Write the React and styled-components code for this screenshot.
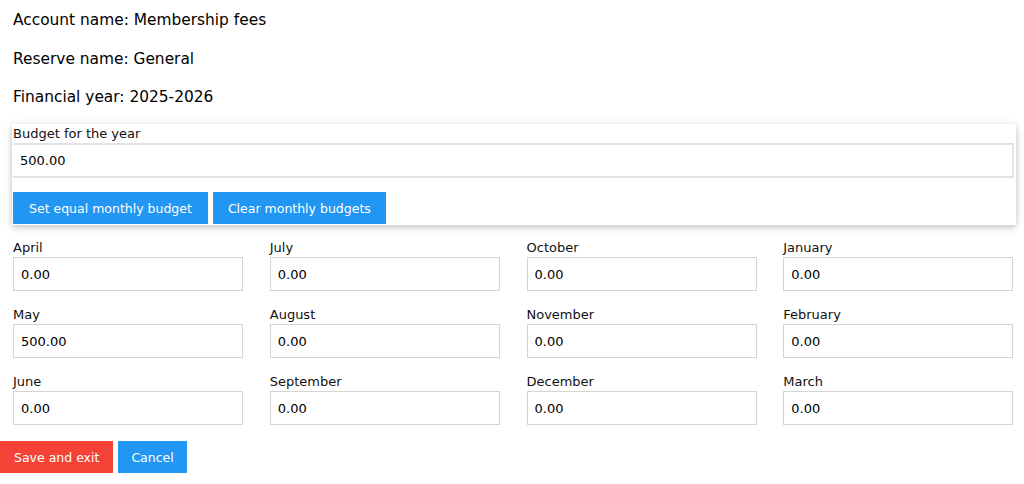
import React from 'react';
import styled, { createGlobalStyle } from 'styled-components';

const GlobalStyle = createGlobalStyle`
  body {
    margin: 0;
    background: #fff;
    font-family: "DejaVu Sans", Verdana, sans-serif;
    color: #000;
    overflow-x: hidden;
  }
`;

const months = [
  ['April', '0.00'], ['July', '0.00'], ['October', '0.00'], ['January', '0.00'],
  ['May', '500.00'], ['August', '0.00'], ['November', '0.00'], ['February', '0.00'],
  ['June', '0.00'], ['September', '0.00'], ['December', '0.00'], ['March', '0.00'],
];

const Page = styled.div`
  display: flex;
  flex-direction: column;
  padding-top: 10px;
`;

const Info = styled.div`
  display: flex;
  flex-direction: column;
  gap: 18.5px;
  padding: 0 13px;
`;

const InfoLine = styled.p`
  margin: 0;
  font-size: 15.4px;
  line-height: 20px;
`;

const Card = styled.div`
  margin: 17px 8px 0 12px;
  padding: 0 2px 1px 1px;
  background: #fff;
  box-shadow: 0 2px 5px 0 rgba(0, 0, 0, 0.16), 0 2px 10px 0 rgba(0, 0, 0, 0.12);
`;

const Label = styled.label`
  display: block;
  font-size: 13px;
  line-height: 19px;
  color: #111;
`;

const Input = styled.input`
  display: block;
  box-sizing: border-box;
  width: 100%;
  height: ${(p) => (p.$wide ? '35px' : '34px')};
  padding: 8px 7px;
  border: 1px solid ${(p) => (p.$wide ? '#e2e2e2' : '#d4d4d4')};
  border-width: ${(p) => (p.$wide ? '2px 2px 2px 0' : '1px')};
  font-family: inherit;
  font-size: 13px;
  color: #000;
  background: #fff;
  outline: none;
`;

const ButtonRow = styled.div`
  display: flex;
  gap: 5px;
  margin-top: 14px;
`;

const Button = styled.button`
  border: none;
  height: 32px;
  padding: 0 ${(p) => p.$pad || 16}px;
  font-family: inherit;
  font-size: 12.5px;
  color: #fff;
  background: ${(p) => (p.$danger ? '#f44336' : '#2196f3')};
  cursor: pointer;
`;

/* row is a touch wider than the viewport, like a negative-margin grid row */
const MonthGrid = styled.div`
  display: grid;
  grid-template-columns: repeat(4, 1fr);
  row-gap: 14px;
  margin: 13px -3px 0 0;
`;

const MonthCell = styled.div`
  padding: 0 13.75px 0 13px;
`;

const Actions = styled(ButtonRow)`
  margin-top: 16px;
`;

export default function App() {
  return (
    <>
      <GlobalStyle />
      <Page>
        <Info>
          <InfoLine>Account name: Membership fees</InfoLine>
          <InfoLine>Reserve name: General</InfoLine>
          <InfoLine>Financial year: 2025-2026</InfoLine>
        </Info>

        <Card>
          <Label>Budget for the year</Label>
          <Input $wide defaultValue="500.00" />
          <ButtonRow>
            <Button>Set equal monthly budget</Button>
            <Button $pad={15}>Clear monthly budgets</Button>
          </ButtonRow>
        </Card>

        <MonthGrid>
          {months.map(([name, value]) => (
            <MonthCell key={name}>
              <Label>{name}</Label>
              <Input defaultValue={value} />
            </MonthCell>
          ))}
        </MonthGrid>

        <Actions>
          <Button $danger $pad={14}>Save and exit</Button>
          <Button $pad={13}>Cancel</Button>
        </Actions>
      </Page>
    </>
  );
}
